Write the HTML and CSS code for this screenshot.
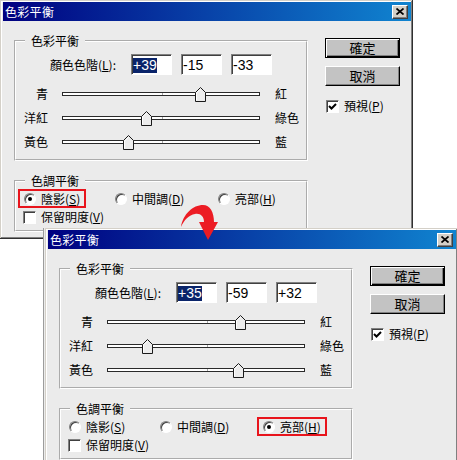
FILE: index.html
```html
<!DOCTYPE html>
<html lang="zh-Hant">
<head>
<meta charset="utf-8">
<title>色彩平衡</title>
<link rel="stylesheet" href="styles.css">
</head>
<body>
<section class="dialog d1">
  <header class="titlebar">
    <span class="title">色彩平衡</span>
    <span class="close"><svg width="8" height="7" viewBox="0 0 8 7"><path d="M0.5 0.5 L7.5 6.5 M7.5 0.5 L0.5 6.5" stroke="#000" stroke-width="1.7" fill="none"/></svg></span>
  </header>
  <div class="body">
    <div class="groups">
      <fieldset class="grp">
        <legend>色彩平衡</legend>
        <div class="levels">
          <span class="lvl-label">顏色色階(<u>L</u>):</span>
          <span class="field"><span class="sel">+39</span></span>
          <span class="field">-15</span>
          <span class="field">-33</span>
        </div>
        <div class="sliders">
          <span class="sl-l">青</span>
          <span class="track"><svg class="thumb" style="left:132px" width="11" height="15" viewBox="0 0 11 15"><path d="M0.5 14.5 V5.5 L5.5 0.5 L10.5 5.5 V14.5 Z" fill="#ececec" stroke="#1a1a1a"/><path d="M1.5 13.5 V6 L5.5 2" stroke="#fff" fill="none"/></svg></span>
          <span class="sl-r">紅</span>
          <span class="sl-l">洋紅</span>
          <span class="track"><svg class="thumb" style="left:78px" width="11" height="15" viewBox="0 0 11 15"><path d="M0.5 14.5 V5.5 L5.5 0.5 L10.5 5.5 V14.5 Z" fill="#ececec" stroke="#1a1a1a"/><path d="M1.5 13.5 V6 L5.5 2" stroke="#fff" fill="none"/></svg></span>
          <span class="sl-r">綠色</span>
          <span class="sl-l">黃色</span>
          <span class="track"><svg class="thumb" style="left:60px" width="11" height="15" viewBox="0 0 11 15"><path d="M0.5 14.5 V5.5 L5.5 0.5 L10.5 5.5 V14.5 Z" fill="#ececec" stroke="#1a1a1a"/><path d="M1.5 13.5 V6 L5.5 2" stroke="#fff" fill="none"/></svg></span>
          <span class="sl-r">藍</span>
        </div>
      </fieldset>
      <fieldset class="grp tone">
        <legend>色調平衡</legend>
        <div class="radios">
          <span class="opt on mark"><i class="radio"></i>陰影(<u>S</u>)</span>
          <span class="opt"><i class="radio"></i>中間調(<u>D</u>)</span>
          <span class="opt"><i class="radio"></i>亮部(<u>H</u>)</span>
        </div>
        <div class="chk chk-keep"><i class="box"></i>保留明度(<u>V</u>)</div>
      </fieldset>
    </div>
    <div class="side">
      <span class="btn def">確定</span>
      <span class="btn">取消</span>
      <div class="chk chk-preview"><i class="box"><svg width="11" height="11" viewBox="0 0 11 11"><path d="M2 5 L4.5 7.5 L9 3" stroke="#000" stroke-width="2" fill="none"/></svg></i>預視(<u>P</u>)</div>
    </div>
  </div>
</section>

<section class="dialog d2">
  <header class="titlebar">
    <span class="title">色彩平衡</span>
    <span class="close"><svg width="8" height="7" viewBox="0 0 8 7"><path d="M0.5 0.5 L7.5 6.5 M7.5 0.5 L0.5 6.5" stroke="#000" stroke-width="1.7" fill="none"/></svg></span>
  </header>
  <div class="body">
    <div class="groups">
      <fieldset class="grp">
        <legend>色彩平衡</legend>
        <div class="levels">
          <span class="lvl-label">顏色色階(<u>L</u>):</span>
          <span class="field"><span class="sel">+35</span></span>
          <span class="field">-59</span>
          <span class="field">+32</span>
        </div>
        <div class="sliders">
          <span class="sl-l">青</span>
          <span class="track"><svg class="thumb" style="left:127px" width="11" height="15" viewBox="0 0 11 15"><path d="M0.5 14.5 V5.5 L5.5 0.5 L10.5 5.5 V14.5 Z" fill="#ececec" stroke="#1a1a1a"/><path d="M1.5 13.5 V6 L5.5 2" stroke="#fff" fill="none"/></svg></span>
          <span class="sl-r">紅</span>
          <span class="sl-l">洋紅</span>
          <span class="track"><svg class="thumb" style="left:34px" width="11" height="15" viewBox="0 0 11 15"><path d="M0.5 14.5 V5.5 L5.5 0.5 L10.5 5.5 V14.5 Z" fill="#ececec" stroke="#1a1a1a"/><path d="M1.5 13.5 V6 L5.5 2" stroke="#fff" fill="none"/></svg></span>
          <span class="sl-r">綠色</span>
          <span class="sl-l">黃色</span>
          <span class="track"><svg class="thumb" style="left:125px" width="11" height="15" viewBox="0 0 11 15"><path d="M0.5 14.5 V5.5 L5.5 0.5 L10.5 5.5 V14.5 Z" fill="#ececec" stroke="#1a1a1a"/><path d="M1.5 13.5 V6 L5.5 2" stroke="#fff" fill="none"/></svg></span>
          <span class="sl-r">藍</span>
        </div>
      </fieldset>
      <fieldset class="grp tone">
        <legend>色調平衡</legend>
        <div class="radios">
          <span class="opt"><i class="radio"></i>陰影(<u>S</u>)</span>
          <span class="opt"><i class="radio"></i>中間調(<u>D</u>)</span>
          <span class="opt on mark"><i class="radio"></i>亮部(<u>H</u>)</span>
        </div>
        <div class="chk chk-keep"><i class="box"></i>保留明度(<u>V</u>)</div>
      </fieldset>
    </div>
    <div class="side">
      <span class="btn def">確定</span>
      <span class="btn">取消</span>
      <div class="chk chk-preview"><i class="box"><svg width="11" height="11" viewBox="0 0 11 11"><path d="M2 5 L4.5 7.5 L9 3" stroke="#000" stroke-width="2" fill="none"/></svg></i>預視(<u>P</u>)</div>
    </div>
  </div>
</section>

<svg class="arrow" width="45" height="45" viewBox="175 200 45 45">
  <path d="M181 227 C183 214 193 205 203 205 C210 205 214 212 214 222 L218 222 L208 240 L199 222 L204 222 C204 216 200 213 195 214 C189 215 184 220 181 227 Z" fill="#ec1c24"/>
</svg>
</body>
</html>
```

FILE: styles.css
```css
* { box-sizing: border-box; }
html, body { margin: 0; padding: 0; background: #fff; }
body {
  width: 457px;
  height: 460px;
  overflow: hidden;
  position: relative;
  font-family: "Noto Sans CJK TC", "Noto Sans CJK SC", sans-serif;
  font-size: 12px;
  line-height: 14px;
  color: #000;
}
u { text-decoration: underline; text-underline-offset: 1px; }

.dialog {
  position: absolute;
  width: 413px;
  height: 239px;
  background: #ebebeb;
  box-shadow: inset -1px -1px 0 #303030, inset 1px 1px 0 #d4d0c8, inset -2px -2px 0 #808080, inset 2px 2px 0 #fff;
}
.d1 { left: 0; top: 0; }
.d2 {
  left: 45px;
  top: 228px;
  box-shadow: inset -1px -1px 0 #303030, inset 1px 1px 0 #d4d0c8, inset -2px -2px 0 #808080, inset 2px 2px 0 #fff, -1px 0 0 #ebebeb, -2px 0 0 #9c9c9c;
}

.titlebar {
  margin: 2px 2px 0 3px;
  height: 19px;
  background: linear-gradient(90deg, #000080 0%, #1084d0 100%);
  display: flex;
  align-items: center;
  justify-content: space-between;
  padding: 0 3px 0 2px;
  color: #fff;
}
.title { font-size: 12px; line-height: 14px; letter-spacing: 0.3px; }
.close {
  width: 16px;
  height: 14px;
  background: #d4d0c8;
  border: 1px solid;
  border-color: #fff #404040 #404040 #fff;
  box-shadow: inset -1px -1px 0 #808080;
  display: flex;
  align-items: center;
  justify-content: center;
  padding-bottom: 1px;
}
.close svg { display: block; }

.body {
  display: flex;
  padding: 13px 0 0 14px;
}
.groups { width: 294px; }

.grp {
  margin: 0;
  padding: 0;
  border: 2px groove #fff;
  min-inline-size: 0;
}
.grp legend {
  margin-left: 9px;
  padding: 0 6px;
  line-height: 14px;
}
.tone { margin-top: 13px; }

.levels {
  display: flex;
  align-items: center;
  gap: 9px;
  margin-top: 6px;
  padding-left: 34px;
  height: 21px;
}
.lvl-label { width: 72px; }
.field {
  width: 41px;
  height: 21px;
  background: #fff;
  border: 1px solid;
  border-color: #808080 #fff #fff #808080;
  box-shadow: inset 1px 1px 0 #404040;
  font-family: "Liberation Sans", Arial, sans-serif;
  font-size: 14px;
  line-height: 15px;
  display: flex;
  align-items: center;
  padding: 1px 0 0 1px;
}
.sel { background: #0a246a; color: #fff; }

.sliders {
  display: grid;
  grid-template-columns: 32px 198px auto;
  grid-auto-rows: 24px;
  column-gap: 14px;
  align-items: center;
  margin-top: 7px;
  padding-bottom: 5px;
}
.sl-l { text-align: right; }
.sl-r { margin-left: 1px; }
.track {
  position: relative;
  height: 4px;
  background: #fff;
  border: 1px solid #2a2a2a;
}
.track::after {
  content: "";
  position: absolute;
  left: 99px;
  top: 0;
  width: 1px;
  height: 2px;
  background: #a8a8a8;
}
.thumb { position: absolute; top: -6px; display: block; z-index: 1; }

.radios {
  display: grid;
  grid-template-columns: 91px 103px auto;
  padding: 1px 0 0 2px;
}
.opt {
  display: flex;
  align-items: center;
  height: 19px;
  border: 2px solid transparent;
  padding: 0 4px;
  justify-self: start;
}
.opt.mark { border-color: #e8141c; }
.radio {
  position: relative;
  width: 12px;
  height: 12px;
  margin-right: 5px;
  border-radius: 50%;
  background: #fff;
  border: 1px solid;
  border-color: #808080 #fff #fff #808080;
  box-shadow: inset 1px 1px 0 #404040;
}
.on .radio::after {
  content: "";
  position: absolute;
  left: 3px;
  top: 3px;
  width: 4px;
  height: 4px;
  border-radius: 50%;
  background: #000;
}

.chk {
  display: flex;
  align-items: center;
  height: 18px;
}
.chk-keep { padding-left: 7px; margin-bottom: 4px; }
.box {
  width: 13px;
  height: 13px;
  margin-right: 5px;
  background: #fff;
  border: 1px solid;
  border-color: #808080 #fff #fff #808080;
  box-shadow: inset 1px 1px 0 #404040;
  display: flex;
  align-items: center;
  justify-content: center;
}
.box svg { display: block; }

.side {
  width: 75px;
  margin-left: 17px;
  padding-top: 4px;
  display: flex;
  flex-direction: column;
}
.btn {
  height: 20px;
  display: flex;
  align-items: center;
  justify-content: center;
  font-size: 13px;
  background: #c3c3c3;
  border: 1px solid;
  border-color: #fff #000 #000 #fff;
  box-shadow: inset -1px -1px 0 #808080;
}
.btn.def {
  border: 1px solid #000;
  box-shadow: inset 1px 1px 0 #fff, inset -1px -1px 0 #000, inset -2px -2px 0 #808080;
}
.btn + .btn { margin-top: 8px; }
.chk-preview { margin-top: 11px; margin-left: 1px; }

.arrow {
  position: absolute;
  left: 175px;
  top: 200px;
  z-index: 5;
}
```
